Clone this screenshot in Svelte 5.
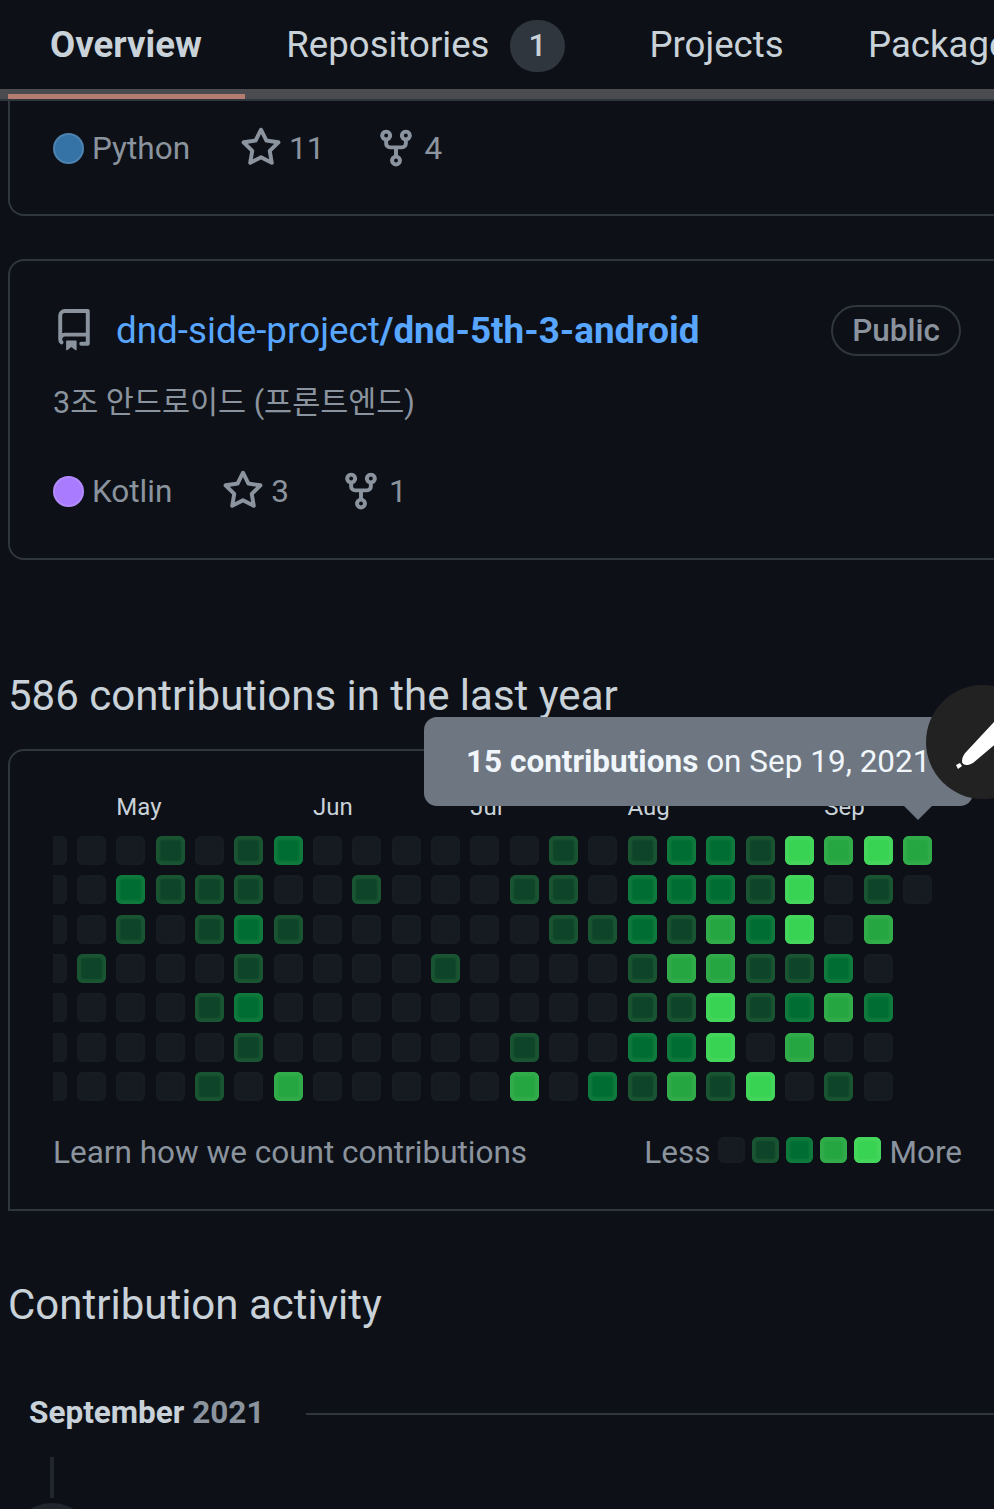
<script lang="ts">
	const star = 'M8 .25a.75.75 0 01.673.418l1.882 3.815 4.21.612a.75.75 0 01.416 1.279l-3.046 2.97.719 4.192a.75.75 0 01-1.088.791L8 12.347l-3.766 1.98a.75.75 0 01-1.088-.79l.72-4.194L.818 6.374a.75.75 0 01.416-1.28l4.21-.611L7.327.668A.75.75 0 018 .25zm0 2.445L6.615 5.5a.75.75 0 01-.564.41l-3.097.45 2.24 2.184a.75.75 0 01.216.664l-.528 3.084 2.769-1.456a.75.75 0 01.698 0l2.77 1.456-.53-3.084a.75.75 0 01.216-.664l2.24-2.183-3.096-.45a.75.75 0 01-.564-.41L8 2.694v.001z';
	const fork = 'M5 3.25a.75.75 0 11-1.5 0 .75.75 0 011.5 0zm0 2.122a2.25 2.25 0 10-1.5 0v.878A2.25 2.25 0 005.75 8.5h1.5v2.128a2.251 2.251 0 101.5 0V8.5h1.5a2.25 2.25 0 002.25-2.25v-.878a2.25 2.25 0 10-1.5 0v.878a.75.75 0 01-.75.75h-4.5A.75.75 0 015 6.25v-.878zm3.75 7.378a.75.75 0 11-1.5 0 .75.75 0 011.5 0zm3-8.75a.75.75 0 100-1.5.75.75 0 000 1.5z';
	const repo = 'M2 2.5A2.5 2.5 0 014.5 0h8.75a.75.75 0 01.75.75v12.5a.75.75 0 01-.75.75h-2.5a.75.75 0 110-1.5h1.75v-2h-8a1 1 0 00-.714 1.7.75.75 0 01-1.072 1.05A2.495 2.495 0 012 11.5v-9zm10.5-1V9h-8c-.356 0-.694.074-1 .208V2.5a1 1 0 011-1h8zM5 12.25v3.25a.25.25 0 00.4.2l1.45-1.087a.25.25 0 01.3 0L8.6 15.7a.25.25 0 00.4-.2v-3.25a.25.25 0 00-.25-.25h-3.5a.25.25 0 00-.25.25z';

	const months = [
		{ name: 'May', col: 3 },
		{ name: 'Jun', col: 8 },
		{ name: 'Jul', col: 12 },
		{ name: 'Aug', col: 16 },
		{ name: 'Sep', col: 21 }
	];

	// one string per weekday, one digit per week, '-' for days still to come
	const cells = [
		'00010120000001012214343',
		'00211100100011022214010',
		'0010121000000112132403-',
		'0100010000100001331120-',
		'0000120000000001141232-',
		'0000010000001002240300-',
		'0000103000003021314010-'
	];
	const legend = [0, 1, 2, 3, 4];
</script>

<div class="page">
	<nav class="tabs">
		<span class="tab active">Overview</span>
		<span class="tab">Repositories<span class="counter">1</span></span>
		<span class="tab">Projects</span>
		<span class="tab">Packages</span>
	</nav>
	<div class="band"><div class="band-active"></div></div>

	<section class="card first">
		<div class="meta">
			<span class="lang"><span class="dot python"></span>Python</span>
			<span class="stat star-stat"><svg viewBox="0 0 16 16"><path d={star} /></svg>11</span>
			<span class="stat"><svg viewBox="0 0 16 16"><path d={fork} /></svg>4</span>
		</div>
	</section>

	<section class="card second">
		<div class="repo-head">
			<svg class="repo-icon" viewBox="0 0 16 16"><path d={repo} /></svg>
			<a class="repo-name" href="#top">dnd-side-project<b>/dnd-5th-3-android</b></a>
			<span class="pill">Public</span>
		</div>
		<p class="desc">3조 안드로이드 (프론트엔드)</p>
		<div class="meta">
			<span class="lang"><span class="dot kotlin"></span>Kotlin</span>
			<span class="stat star-stat"><svg viewBox="0 0 16 16"><path d={star} /></svg>3</span>
			<span class="stat"><svg viewBox="0 0 16 16"><path d={fork} /></svg>1</span>
		</div>
	</section>

	<h2 class="count">586 contributions in the last year</h2>

	<section class="graph">
		<div class="clip">
			<div class="calendar">
				{#each months as m}
					<span class="month" style="grid-column: {m.col} / span 3">{m.name}</span>
				{/each}
				{#each cells as row, r}
					{#each row.split('') as level, c}
						{#if level !== '-'}
							<i class="cell l{level}" style="grid-row: {r + 2}; grid-column: {c + 1}"></i>
						{/if}
					{/each}
				{/each}
			</div>
		</div>
		<div class="graph-foot">
			<span>Learn how we count contributions</span>
			<div class="legend">
				<span class="less">Less</span>
				{#each legend as l}
					<i class="cell small l{l}"></i>
				{/each}
				<span class="more">More</span>
			</div>
		</div>
	</section>

	<h2 class="activity">Contribution activity</h2>

	<div class="month-head">
		<span class="month-title"><b>September</b> <em>2021</em></span>
		<div class="rule"></div>
	</div>

	<div class="timeline"></div>
	<div class="badge"></div>

	<div class="tooltip"><b>15 contributions</b> on Sep 19, 2021</div>
	<div class="fab">
		<svg viewBox="0 0 114 114">
			<path class="pen" d="M36 76 C36 72 38 69 41 66 L68 37 L80 30 L80 50 L47 78 C42 81 36 81 36 76Z" />
			<path class="pen" d="M30 80 L34 78 L36 81 L32 84Z" />
		</svg>
	</div>
</div>

<style>
	:global(body) {
		background: #0d1117;
	}

	.page {
		position: relative;
		width: 994px;
		height: 1509px;
		overflow: hidden;
		background: #0d1117;
		font-family: Roboto, 'Noto Sans CJK KR', sans-serif;
		color: #c9d1d9;
	}

	.tabs {
		display: flex;
		align-items: center;
		height: 89px;
		padding-left: 50px;
		font-size: 36.6px;
		white-space: nowrap;
	}

	.tab {
		display: flex;
		align-items: center;
		margin-right: 84.5px;
	}

	.tab.active {
		font-weight: 700;
	}

	.counter {
		width: 55px;
		height: 52px;
		margin: 2px 0 0 20.5px;
		border-radius: 26px;
		background: #30363d;
		font-size: 31.5px;
		font-weight: 500;
		line-height: 52px;
		text-align: center;
	}

	.band {
		height: 10px;
		padding-top: 5px;
		box-sizing: border-box;
		background: #4a4c50;
		box-shadow: 0 2px 0 #30363d;
	}

	.band-active {
		width: 237px;
		height: 5px;
		margin-left: 8px;
		background: #b57d72;
	}

	.card {
		margin: 0 -40px 0 8px;
		padding: 0 71px 0 43px;
		border: 2px solid #30363d;
		border-radius: 16px;
		box-sizing: border-box;
	}

	.first {
		height: 117px;
		padding-top: 28px;
		border-top: 0;
		border-top-left-radius: 0;
		border-top-right-radius: 0;
	}

	.second {
		height: 301px;
		margin-top: 43px;
		padding-top: 44px;
	}

	.meta {
		display: flex;
		align-items: center;
		height: 42px;
		font-size: 31.5px;
		color: #8b949e;
	}

	.lang {
		display: flex;
		align-items: center;
		margin-right: 50px;
	}

	.dot {
		width: 31px;
		height: 31px;
		margin-right: 8px;
		border-radius: 50%;
		border: 2px solid rgba(255, 255, 255, 0.12);
		box-sizing: border-box;
	}

	.python {
		background: #3572a5;
	}

	.kotlin {
		background: #a97bff;
	}

	.stat {
		display: flex;
		align-items: center;
	}

	.stat svg {
		width: 42px;
		height: 42px;
		margin-right: 7px;
		fill: #8b949e;
		fill-rule: evenodd;
	}

	.star-stat {
		margin-right: 51px;
	}

	.repo-head {
		display: flex;
		align-items: center;
		height: 50px;
	}

	.repo-icon {
		width: 42px;
		height: 42px;
		margin-right: 21px;
		fill: #8b949e;
		fill-rule: evenodd;
	}

	.repo-name {
		color: #58a6ff;
		font-size: 36.8px;
		text-decoration: none;
		white-space: nowrap;
	}

	.pill {
		margin-left: auto;
		padding: 0 19px;
		height: 51px;
		line-height: 47px;
		border: 2px solid #30363d;
		border-radius: 26px;
		box-sizing: border-box;
		font-size: 31.5px;
		font-weight: 500;
		color: #8b949e;
	}

	.desc {
		margin: 25px 0 44px;
		font-size: 30.5px;
		line-height: 46px;
		color: #8b949e;
	}

	.count,
	.activity {
		margin: 0;
		font-size: 42px;
		font-weight: 400;
		line-height: 52px;
		white-space: nowrap;
	}

	.count {
		margin-top: 110px;
		padding-left: 8px;
	}

	.graph {
		height: 462px;
		margin: 27px -40px 0 8px;
		padding: 0 0 0 43px;
		border: 2px solid #30363d;
		border-radius: 16px 16px 0 0;
		box-sizing: border-box;
	}

	.clip {
		width: 890px;
		margin-top: 41px;
		overflow: hidden;
	}

	.calendar {
		display: grid;
		grid-template-columns: repeat(23, 29px);
		grid-template-rows: 33.5px repeat(7, 29px);
		column-gap: 10.33px;
		row-gap: 10.4px;
		margin-left: -15.33px;
	}

	.month {
		grid-row: 1;
		font-size: 24px;
		line-height: 31px;
		white-space: nowrap;
	}

	.cell {
		display: block;
		border-radius: 6px;
		box-sizing: border-box;
		box-shadow: inset 0 0 2px 4px var(--ring);
	}

	.small {
		width: 26.5px;
		height: 26.5px;
		margin: 0 7.5px 4px 0;
	}

	.l0 {
		background: #161b22;
		--ring: #171c23;
	}

	.l1 {
		background: #0e4429;
		--ring: #1a5533;
	}

	.l2 {
		background: #006d32;
		--ring: #0f7a3d;
	}

	.l3 {
		background: #26a641;
		--ring: #32ab4b;
	}

	.l4 {
		background: #39d353;
		--ring: #44d65c;
	}

	.graph-foot {
		display: flex;
		align-items: center;
		justify-content: space-between;
		width: 909px;
		margin-top: 32.5px;
		font-size: 31.5px;
		color: #8b949e;
		white-space: nowrap;
	}

	.legend {
		display: flex;
		align-items: center;
	}

	.less {
		margin-right: 8px;
	}

	.more {
		margin-left: 1px;
	}

	.activity {
		margin-top: 68px;
		padding-left: 8px;
	}

	.month-head {
		display: flex;
		align-items: center;
		margin-top: 63px;
		padding-left: 29px;
	}

	.month-title {
		font-size: 31.5px;
		white-space: nowrap;
	}

	.month-title em {
		font-style: normal;
		font-weight: 700;
		color: #8b949e;
	}

	.rule {
		flex: 1;
		height: 2px;
		margin: 2px 0 0 42px;
		background: #30363d;
	}

	.timeline {
		width: 4px;
		height: 41px;
		margin: 26px 0 0 50px;
		background: #21262d;
	}

	.badge {
		width: 84px;
		height: 84px;
		margin: 5px 0 0 10px;
		border-radius: 50%;
		background: #21262d;
	}

	.tooltip {
		position: absolute;
		top: 717px;
		left: 424px;
		width: 549px;
		height: 89px;
		padding-left: 42px;
		box-sizing: border-box;
		border-radius: 13px;
		background: #6e7681;
		color: #f0f6fc;
		font-size: 31.5px;
		line-height: 89px;
		white-space: nowrap;
	}

	.tooltip::after {
		content: '';
		position: absolute;
		top: 100%;
		left: 480px;
		border: 14px solid transparent;
		border-bottom: 0;
		border-top-color: #6e7681;
	}

	.fab {
		position: absolute;
		top: 685px;
		left: 926px;
		width: 114px;
		height: 114px;
		border-radius: 50%;
		background: #222222;
	}

	.fab svg {
		display: block;
		width: 114px;
		height: 114px;
	}

	.pen {
		fill: #ffffff;
	}
</style>
